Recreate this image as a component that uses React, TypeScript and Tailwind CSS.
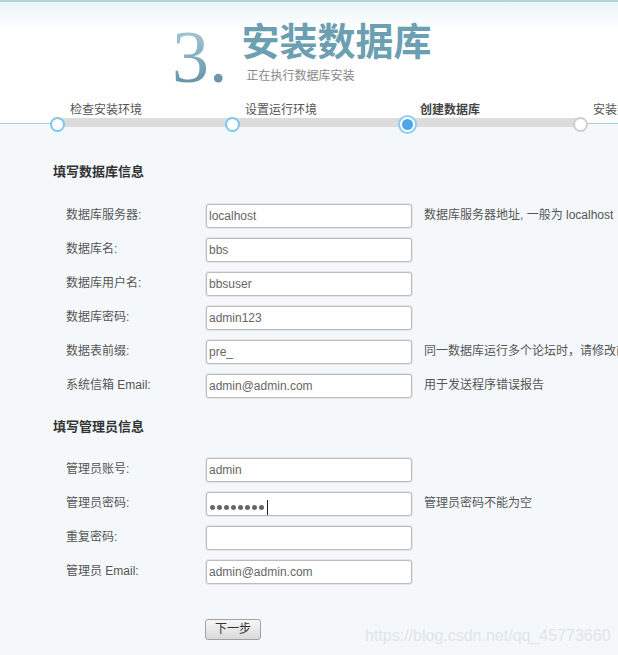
import React from "react";

const font = { fontFamily: '"Liberation Sans", "Noto Sans CJK SC", sans-serif' };

const steps = [
  { label: "检查安装环境", state: "done" },
  { label: "设置运行环境", state: "done" },
  { label: "创建数据库", state: "current" },
  { label: "安装数据", state: "todo" },
];

function Circle({ state }: { state: string }) {
  if (state === "current") {
    return (
      <div className="w-[19px] h-[19px] -ml-[2px] -mt-[2px] rounded-full border-2 border-[#8ecdf3] bg-white flex items-center justify-center">
        <div className="w-[11px] h-[11px] rounded-full bg-[#4ba7e8]" />
      </div>
    );
  }
  if (state === "todo") {
    return <div className="w-[15px] h-[15px] rounded-full border-[2.5px] border-[#cfcfcf] bg-white" />;
  }
  return <div className="w-[15px] h-[15px] rounded-full border-[2.5px] border-[#7ec5f0] bg-white" />;
}

function Row({
  label,
  value,
  note,
  password,
}: {
  label: string;
  value: string;
  note?: string;
  password?: boolean;
}) {
  return (
    <div className="flex items-center h-[26px]">
      <div className="w-[152px] shrink-0 pl-[13px] text-[12px] text-[#555]">{label}</div>
      <div className="relative shrink-0 w-[208px] h-[26px] p-px">
        <input
          readOnly
          type="text"
          value={password ? "" : value}
          className="w-[206px] h-[24px] border border-[#bcbcbc] rounded-[3px] bg-white pl-[2px] text-[12px] text-[#666] outline-none shadow-[0_0_0_1px_#e6e6e6]"
          style={font}
        />
        {password && (
          <div className="absolute left-[5px] top-[10px] flex items-center gap-[2px]">
            {Array.from({ length: 8 }).map((_, i) => (
              <div key={i} className="w-[5px] h-[5px] rounded-full bg-[#666]" />
            ))}
            <div className="ml-[1px] w-px h-[15px] bg-[#222]" />
          </div>
        )}
      </div>
      {note && <div className="ml-[11px] whitespace-nowrap text-[12px] text-[#555]">{note}</div>}
    </div>
  );
}

export default function App() {
  return (
    <div className="relative w-[618px] h-[655px] overflow-hidden bg-[#f4f8fb]" style={font}>
      {/* header */}
      <div className="relative h-[124px] border-t-2 border-b border-t-[#b3d4df] border-b-[#a9d0df] bg-[linear-gradient(to_bottom,#eaf4f8,#ffffff_28px)]">
        <div className="flex pl-[172px] pt-[18px]">
          <div
            className="text-[74px] leading-none bg-[linear-gradient(to_bottom,#b0d0dc,#588a9f)] bg-clip-text text-transparent"
            style={{ fontFamily: '"Liberation Serif", serif' }}
          >
            3.
          </div>
          <div className="ml-[14px] pt-[3px] flex flex-col">
            <div className="text-[38px] leading-none font-bold text-[#6d9fb3]">安装数据库</div>
            <div className="ml-[5px] mt-[8px] text-[12px] leading-[14px] text-[#888]">正在执行数据库安装</div>
          </div>
        </div>
        {/* steps */}
        <div className="absolute left-[50px] top-[101px] w-[700px]">
          <div className="absolute left-[7px] top-[15px] w-[525px] h-[9px] bg-[#dcdcdc]" />
          <div className="relative flex">
            {steps.map((s, i) => (
              <div key={i} className={"shrink-0 " + (i === 2 ? "w-[173px]" : "w-[175px]")}>
                <div
                  className={
                    "pl-[20px] h-[14px] text-[12px] leading-[14px] whitespace-nowrap " +
                    (s.state === "current" ? "font-bold text-[#444]" : "text-[#555]")
                  }
                >
                  {s.label}
                </div>
                <div>
                  <Circle state={s.state} />
                </div>
              </div>
            ))}
          </div>
        </div>
      </div>

      {/* form */}
      <div className="pl-[53px] pt-[38px]">
        <div className="text-[13px] leading-[20px] font-bold text-[#333]">填写数据库信息</div>
        <div className="mt-[20px] flex flex-col gap-[8px]">
          <Row label="数据库服务器:" value="localhost" note="数据库服务器地址, 一般为 localhost" />
          <Row label="数据库名:" value="bbs" />
          <Row label="数据库用户名:" value="bbsuser" />
          <Row label="数据库密码:" value="admin123" />
          <Row label="数据表前缀:" value="pre_" note="同一数据库运行多个论坛时，请修改前缀" />
          <Row label="系统信箱 Email:" value="admin@admin.com" note="用于发送程序错误报告" />
        </div>
        <div className="mt-[19px] text-[13px] leading-[20px] font-bold text-[#333]">填写管理员信息</div>
        <div className="mt-[19px] flex flex-col gap-[8px]">
          <Row label="管理员账号:" value="admin" />
          <Row label="管理员密码:" value="" password note="管理员密码不能为空" />
          <Row label="重复密码:" value="" />
          <Row label="管理员 Email:" value="admin@admin.com" />
        </div>
        <div className="mt-[32px] ml-[152px]">
          <button
            className="w-[56px] h-[21px] rounded-[3px] border border-[#a2a2a2] bg-[linear-gradient(to_bottom,#f7f7f7,#d9d9d9)] text-[12px] leading-none text-[#333]"
            style={font}
          >
            下一步
          </button>
        </div>
      </div>

      <div className="absolute left-[365px] top-[626px] text-[16px] leading-[20px] text-[#dfe5ea] whitespace-nowrap">
        https://blog.csdn.net/qq_45773660
      </div>
    </div>
  );
}
